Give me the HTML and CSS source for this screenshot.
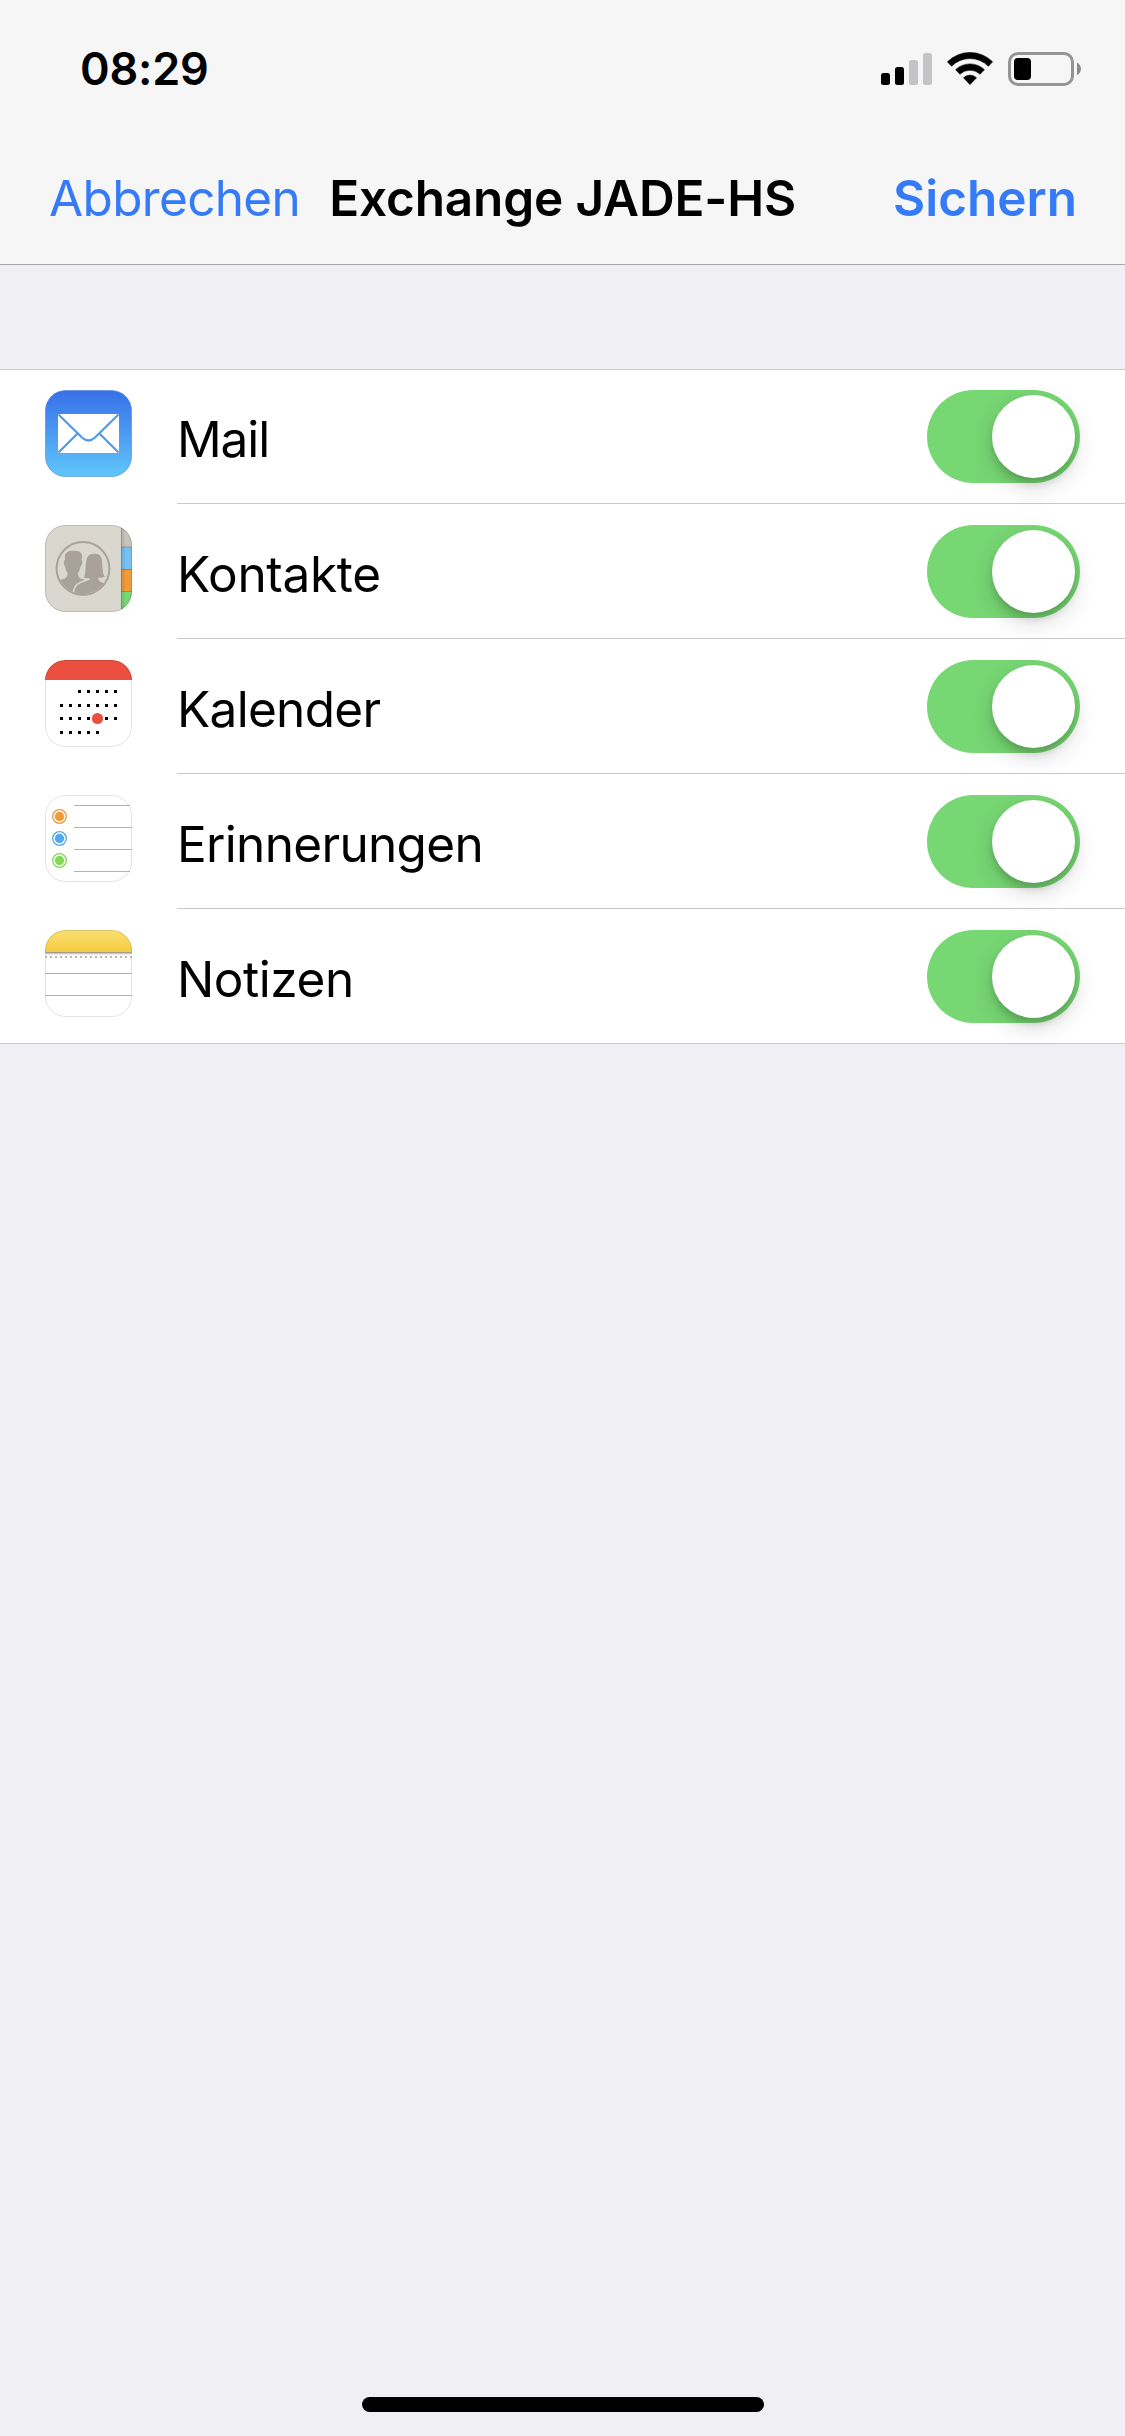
FILE: index.html
```html
<!DOCTYPE html>
<html lang="de">
<head>
<meta charset="utf-8">
<title>Exchange JADE-HS</title>
<link rel="stylesheet" href="styles.css">
</head>
<body>
<header class="header">
  <div class="status">
    <span class="time">08:29</span>
    <svg class="status-icons" width="204" height="40" viewBox="0 0 204 40">
      <g>
        <rect x="1" y="23" width="9" height="12" rx="2.5"/>
        <rect x="15" y="17" width="9" height="18" rx="2.5"/>
        <rect x="29" y="10" width="9" height="25" rx="2.5" fill="#c4c4c6"/>
        <rect x="43" y="3" width="9" height="32" rx="2.5" fill="#c4c4c6"/>
      </g>
      <g>
        <path d="M67.4 11.8a32 32 0 0 1 45.2 0l-4.2 4.4a26 26 0 0 0-36.8 0z" stroke="#000" stroke-width=".6" stroke-linejoin="round"/>
        <path d="M75.6 19.7a20.8 20.8 0 0 1 28.8 0l-4.3 4.5a14.6 14.6 0 0 0-20.2 0z" stroke="#000" stroke-width=".6" stroke-linejoin="round"/>
        <path d="M83.6 27.8a9.2 9.2 0 0 1 12.8 0L90 34.5z" stroke="#000" stroke-width=".8" stroke-linejoin="round"/>
      </g>
      <g>
        <rect x="129.5" y="3.5" width="63" height="31" rx="8.5" fill="none" stroke="#959595" stroke-width="3"/>
        <rect x="134" y="8" width="17" height="22" rx="4"/>
        <path d="M197 12.5c5.3 2.6 5.3 10 0 12.6z" fill="#8b8b8b"/>
      </g>
    </svg>
  </div>
  <nav class="nav">
    <a class="cancel">Abbrechen</a>
    <h1 class="title">Exchange JADE-HS</h1>
    <a class="save">Sichern</a>
  </nav>
</header>

<main class="list">
  <div class="row">
    <svg class="icon" viewBox="0 0 87 87">
      <defs><linearGradient id="mail" x2="0" y2="1"><stop stop-color="#3870e9"/><stop offset="1" stop-color="#60c6fb"/></linearGradient></defs>
      <rect x=".5" y=".5" width="86" height="86" rx="20" fill="url(#mail)" stroke="#4c86d2" stroke-opacity=".6"/>
      <rect x="13" y="24" width="61" height="39" fill="#fff"/>
      <path d="M13.5 24.500L37 47.500q6.500 6 13 0L73.500 24.500M13.500 62.500L32.300 43.700M73.500 62.500L54.700 43.700" fill="none" stroke="#4d9af1" stroke-width="2.200"/>
    </svg>
    <div class="body"><span class="label label-mail">Mail</span><span class="toggle"><i class="knob"></i></span></div>
  </div>
  <div class="row">
    <svg class="icon" viewBox="0 0 87 87">
      <defs>
        <clipPath id="tile"><rect width="87" height="87" rx="20.500"/></clipPath>
        <clipPath id="disc"><circle cx="38" cy="43.500" r="25.500"/></clipPath>
        <linearGradient id="shade"><stop stop-color="#000" stop-opacity=".12"/><stop offset="1" stop-color="#000" stop-opacity="0"/></linearGradient>
      </defs>
      <g clip-path="url(#tile)">
        <rect width="87" height="87" fill="#d9d7ce"/>
        <rect x="76" width="11" height="22" fill="#c6c4bc"/>
        <rect x="76" y="22" width="11" height="22" fill="#76c1f4"/>
        <rect x="76" y="44" width="11" height="22" fill="#f09a38"/>
        <rect x="76" y="66" width="11" height="21" fill="#78d775"/>
        <path d="M76 22h11M76 44.500h11M76 66.500h11" stroke="#000" stroke-opacity=".2"/>
        <rect x="76" width="5" height="87" fill="url(#shade)"/>
        <path d="M76.400 0v87" stroke="#000" stroke-opacity=".15"/>
      </g>
      <circle cx="38" cy="43.500" r="26.400" fill="none" stroke="#a9a29b" stroke-width="2"/>
      <g clip-path="url(#disc)" fill="#a9a29b">
        <path d="M11 56l9-2.500q3-1.500 2.500-5.500-2-2.500-2.500-6.500-1.500-2-1-5.500.5-1.500 1-1.500c-1.500-8 5-9.500 10-8.500 7-1 8 5 6.500 9 1.500 1.500.5 5-1 6.500q-.5 4-2.500 6.500-.5 4 2.500 5.500l7 2v20H11z"/>
        <path d="M28 73c0-15 6-15 14-18l2.500-1q-4 .5-7-1c3-4 2-9 2.500-14 .5-8 4-11.500 9-11 7-1 9 4 9 11 .5 5 0 10 3 13q-3 2-7 1.500 0 2 3 3l11 4v20H28z" stroke="#d9d7ce" stroke-width="1.600"/>
      </g>
      <rect x=".5" y=".5" width="86" height="86" rx="20" fill="none" stroke="#000" stroke-opacity=".13"/>
    </svg>
    <div class="body"><span class="label label-contacts">Kontakte</span><span class="toggle"><i class="knob"></i></span></div>
  </div>
  <div class="row">
    <svg class="icon" viewBox="0 0 87 87">
      <rect width="87" height="87" rx="20.500" fill="#fff"/>
      <rect width="87" height="20" fill="#eb4f3f" clip-path="url(#tile)"/>
      <rect x=".5" y=".5" width="86" height="86" rx="20" fill="none" stroke="#000" stroke-opacity=".11"/>
      <g stroke="#000" stroke-width="3" stroke-dasharray="3 6">
        <path d="M33 31.500h39M15 45.500h57M15 58.500h57M15 72.500h39"/>
      </g>
      <circle cx="52.500" cy="58.500" r="5.600" fill="#eb4f3f"/>
    </svg>
    <div class="body"><span class="label label-calendar">Kalender</span><span class="toggle"><i class="knob"></i></span></div>
  </div>
  <div class="row">
    <svg class="icon" viewBox="0 0 87 87">
      <rect x=".5" y=".5" width="86" height="86" rx="20" fill="#fff" stroke="#e3e3e3"/>
      <path d="M29 10.500h56M29 32.500h58M29 54.500h58M29 76.500h56" stroke="#b0b0b2"/>
      <g fill="#f09a38"><circle cx="14.500" cy="21.500" r="7.500"/><circle cx="14.500" cy="21.500" r="5.400" stroke="#fff" stroke-width="1.500"/></g>
      <g fill="#54a8ee"><circle cx="14.500" cy="43.500" r="7.500"/><circle cx="14.500" cy="43.500" r="5.400" stroke="#fff" stroke-width="1.500"/></g>
      <g fill="#84d952"><circle cx="14.500" cy="65.500" r="7.500"/><circle cx="14.500" cy="65.500" r="5.400" stroke="#fff" stroke-width="1.500"/></g>
    </svg>
    <div class="body"><span class="label label-reminders">Erinnerungen</span><span class="toggle"><i class="knob"></i></span></div>
  </div>
  <div class="row">
    <svg class="icon" viewBox="0 0 87 87">
      <defs><linearGradient id="notes" x2="0" y2="1"><stop stop-color="#f9df73"/><stop offset="1" stop-color="#f5cc40"/></linearGradient></defs>
      <rect width="87" height="87" rx="20.500" fill="#fff"/>
      <rect width="87" height="22" fill="url(#notes)" clip-path="url(#tile)"/>
      <rect x=".5" y=".5" width="86" height="86" rx="20" fill="none" stroke="#000" stroke-opacity=".11"/>
      <path d="M0 22.500h87" stroke="#a49c88"/>
      <path d="M0 23.500h87" stroke="#cacaca"/>
      <path d="M0 24.500h87" stroke="#e8e8e8"/>
      <path d="M0 27h87" stroke="#b4b4b4" stroke-width="2" stroke-dasharray="2 3"/>
      <path d="M0 43.500h87M0 65.500h87" stroke="#b0b0b4"/>
    </svg>
    <div class="body"><span class="label label-notes">Notizen</span><span class="toggle"><i class="knob"></i></span></div>
  </div>
</main>
<footer class="home"><div class="home-bar"></div></footer>
</body>
</html>
```
FILE: styles.css
```css
* { box-sizing: border-box; }
body {
  margin: 0;
  min-height: 2436px;
  display: flex;
  flex-direction: column;
  background: #efeff4;
  font-family: Inter, "Liberation Sans", sans-serif;
  font-size: 49.5px;
  line-height: 60px;
  color: #000;
}
.header {
  height: 265px;
  background: #f6f6f6;
  border-bottom: 1px solid #a7a7aa;
}
.status {
  height: 168px;
  padding: 42px 41px 0 80px;
  display: flex;
  justify-content: space-between;
  align-items: flex-start;
}
.time {
  font-size: 45px;
  line-height: 54px;
  font-weight: 600;
  letter-spacing: -.2px;
}
.status-icons { margin-top: 8px; }
.nav {
  display: flex;
  padding: 0 48px 0 49px;
}
.cancel, .save { color: #357bf7; }
.cancel { letter-spacing: -.66px; }
.title {
  margin: 0 0 0 29px;
  font-size: inherit;
  font-weight: 600;
  letter-spacing: -.15px;
}
.save { margin-left: auto; font-weight: 600; }

.list {
  margin-top: 104px;
  background: #fff;
  border-top: 1px solid #c8c7cc;
  border-bottom: 1px solid #c8c7cc;
}
.row {
  height: 135px;
  padding-left: 45px;
  display: flex;
  align-items: flex-start;
}
.row:last-child { height: 133px; }
.icon {
  width: 87px;
  height: 87px;
  margin: 20px 45px 0 0;
  flex: none;
}
.body {
  flex: 1;
  height: 134px;
  display: flex;
  justify-content: space-between;
  align-items: flex-start;
  padding-right: 45px;
  border-bottom: 1px solid #c8c7cc;
}
.row:last-child .body { height: 133px; border-bottom: 0; }
.label { margin-top: 39px; }
.label-mail { letter-spacing: -1.1px; }
.label-contacts { letter-spacing: -.3px; }
.label-calendar { letter-spacing: -.7px; }
.label-reminders { letter-spacing: -.68px; }
.label-notes { letter-spacing: -.45px; }
.toggle {
  width: 153px;
  height: 93px;
  margin-top: 20px;
  padding: 5px;
  display: flex;
  justify-content: flex-end;
  border-radius: 47px;
  background: #77d773;
}
.knob {
  width: 83px;
  height: 83px;
  border-radius: 50%;
  background: #fff;
  box-shadow: 0 9px 24px rgba(0, 0, 0, .15), 0 6px 8px -1px rgba(0, 0, 0, .17);
}
.home {
  margin-top: auto;
  padding-bottom: 24px;
  display: flex;
  justify-content: center;
}
.home-bar {
  width: 402px;
  height: 15px;
  border-radius: 8px;
  background: #000;
}
```
